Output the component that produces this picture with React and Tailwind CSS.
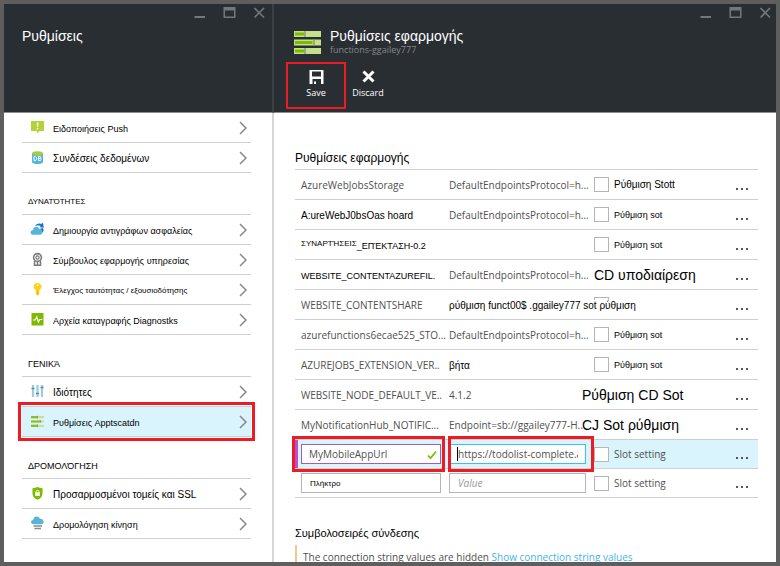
import React from "react";

const LATIN = "font-['Open_Sans','Noto_Sans',sans-serif] text-[#505050]";
const GREEK = "font-['Liberation_Sans',Arial,sans-serif] text-black";

function WindowControls() {
  return (
    <div className="flex gap-4 text-[#74787a]">
      <button type="button" aria-label="Minimize" className="h-[14px] w-[14px]">
        <svg viewBox="0 0 14 14" className="block" fill="currentColor">
          <rect x="1.5" y="9" width="10.5" height="2" />
        </svg>
      </button>
      <button type="button" aria-label="Maximize" className="h-[14px] w-[14px]">
        <svg viewBox="0 0 14 14" className="block" fill="currentColor">
          <path fillRule="evenodd" d="M.5 0h12v11H.5zM2 3.500h9v6H2z" />
        </svg>
      </button>
      <button type="button" aria-label="Close" className="h-[14px] w-[14px]">
        <svg viewBox="0 0 14 14" className="block" fill="none" stroke="currentColor" strokeWidth="1.6">
          <path d="M1.500 1l9.500 9.500M11 1l-9.500 9.500" />
        </svg>
      </button>
    </div>
  );
}

const ICONS = {
  push: (
    <>
      <path d="M1 1h13v10h-4.500l-2.500 2.500v-2.500h-6z" fill="#b2d235" />
      <path d="M6.700 2.500h1.700l-.3 4.500h-1.100z" fill="#fff" />
      <circle cx="7.500" cy="8.600" r=".9" fill="#fff" />
    </>
  ),
  data: (
    <>
      <path d="M2 3v9c0 2.700 11 2.700 11 0v-9z" fill="#55b5dc" />
      <path d="M2 3.500c0-3 11-3 11 0s-11 2.700-11 0z" fill="#a6ce39" />
      <path d="M4 6.500v4h1.200c2 0 2-4 0-4zM8.600 6.500v4h1.400c1.500 0 1.300-2 .2-2 1-.2 1-2-.2-2zM8.600 8.500h1.400" fill="none" stroke="#fff" strokeWidth="1" />
    </>
  ),
  backup: (
    <>
      <path d="M5 4c2-2.500 4-3 6-2l2-1.200.8 5-4.300-.6 1.200-1.200c-2-.7-3.500-.5-5.700 0z" fill="#1877c9" />
      <path d="M9.500 7l3.500-1c1.200 2.500.5 4.500-1.500 5z" fill="#1877c9" />
      <path d="M3.500 12.800c-4 0-3.500-4.800-.4-4.800 0-4 5.200-4.200 6.200-1 3.700-.7 4.200 5.800.4 5.800z" fill="#59b4d9" />
    </>
  ),
  advisor: (
    <>
      <circle cx="7.500" cy="5.500" r="3.900" fill="#fff" stroke="#7a7a7a" strokeWidth="1.600" />
      <circle cx="7.500" cy="5.500" r="1.600" fill="none" stroke="#7a7a7a" strokeWidth="1.200" />
      <path d="M4.500 9v4.300h6V9M7.500 9v4" fill="none" stroke="#7a7a7a" strokeWidth="1.500" />
    </>
  ),
  key: (
    <>
      <path d="M7.500 1c2.200 0 4 1.600 4 3.700 0 1.500-.9 2.700-2.200 3.300v4.200l-1.500 1.500-1.800-1.500v-4.200c-1.300-.6-2.400-1.800-2.400-3.300 0-2.100 1.700-3.700 3.900-3.700z" fill="#fcd116" />
      <circle cx="7.500" cy="3.300" r="1" fill="#fff" />
      <path d="M7.600 8v5" stroke="#e8b400" strokeWidth=".8" />
    </>
  ),
  diagnostics: (
    <>
      <path d="M1.500 1h12v12.500h-12z" fill="#7fba00" />
      <path d="M3 8h2.200l1.600-3 1.600 5 1.400-2.500h2.500" fill="none" stroke="#fff" strokeWidth="1.200" />
    </>
  ),
  properties: (
    <>
      <path d="M3 1v12M7.500 1v12M12 1v12" stroke="#9ccbe2" strokeWidth="2.200" />
      <path d="M1.500 4.500h3M6 9.500h3M10.500 3.500h3" stroke="#5a8ba4" strokeWidth="1.500" />
    </>
  ),
  settings: (
    <>
      <path d="M1 3.200h13M1 7.500h13M1 11.800h13" stroke="#c9e08f" strokeWidth="2.200" />
      <path d="M1 3.200h6M1 7.500h9M1 11.800h6" stroke="#8cbe26" strokeWidth="2.200" />
      <path d="M7.500 1.800v2.800M10.500 6v2.800M7.500 10.400v2.800" stroke="#9a9a9a" strokeWidth="1" />
    </>
  ),
  domains: (
    <>
      <path d="M7.500 .8c1.500 1 3.200 1.400 5 1.400v5.600c0 3-2.200 4.700-5 5.900-2.800-1.200-5-2.900-5-5.900V2.200c1.800 0 3.500-.4 5-1.400z" fill="#7fba00" />
      <path d="M5.200 6.200h4.600v3.700h-4.600z" fill="#fff" />
      <path d="M6 6.200c0-2.500 3-2.500 3 0" fill="none" stroke="#fff" strokeWidth="1" />
    </>
  ),
  traffic: (
    <>
      <path d="M4 8.300c-4 0-3.800-4.100-.8-4.200.2-4.200 5.400-4.600 6.600-1.400 4.800-.6 5 5.600 1.300 5.600z" fill="#59b4d9" />
      <path d="M3.500 10h8.500M4.500 12.500h6.500" stroke="#8a8a8a" strokeWidth="1.300" />
    </>
  ),
};

function NavItem({ icon, label, size = "text-[9px]", selected }) {
  return (
    <li className={`relative border-b border-[#cfcfcf] ${selected ? "bg-[#d9f4fd]" : ""}`}>
      <a href="#" className="flex h-[29px] items-center pl-2 pr-1">
        <svg viewBox="0 0 15 15" className="h-[15px] w-[15px] shrink-0">{ICONS[icon]}</svg>
        <span className={`ml-2 flex-1 whitespace-nowrap pt-[3px] leading-4 ${GREEK} ${size}`}>{label}</span>
        <svg viewBox="0 0 8 14" className="h-[14px] w-2 shrink-0" fill="none" stroke="#85888a" strokeWidth="1.5">
          <path d="M1 1l6 6-6 6" />
        </svg>
      </a>
      {selected && (
        <span className="pointer-events-none absolute -inset-x-[4px] -inset-y-[5px] border-[3px] border-[#ed1c24]" />
      )}
    </li>
  );
}

function NavHeading({ children, size = "text-[9px]" }) {
  return (
    <h2 className={`flex h-[42px] items-center border-b border-[#cfcfcf] pl-[6px] pt-4 leading-4 ${GREEK} ${size}`}>
      {children}
    </h2>
  );
}

function Dots() {
  return (
    <button type="button" aria-label="More" className="mt-2 flex h-3 w-4 items-center gap-[3px] px-[2px]">
      <span className="h-[2px] w-[2px] shrink-0 bg-[#555]" />
      <span className="h-[2px] w-[2px] shrink-0 bg-[#555]" />
      <span className="h-[2px] w-[2px] shrink-0 bg-[#555]" />
    </button>
  );
}

function SlotBox({ label, latin, size = "text-[9px]" }) {
  return (
    <label className="flex items-center gap-[5px] whitespace-nowrap">
      <input
        type="checkbox"
        aria-label={label || "Slot setting"}
        className="h-[15px] w-[15px] shrink-0 appearance-none border border-[#b5b5b5] bg-white"
      />
      <span className={`leading-4 ${latin ? `${LATIN} text-[10px]` : `${GREEK} ${size}`}`}>{label}</span>
    </label>
  );
}

const ENDPOINT = "DefaultEndpointsProtocol=h...";
const ROWS = [
  { name: "AzureWebJobsStorage", value: ENDPOINT, slot: "Ρύθμιση Stott", slotSize: "text-[10px]" },
  { name: "A:ureWebJ0bsOas hoard", greekName: "text-[10px]", value: ENDPOINT, slot: "Ρύθμιση sot" },
  { split: ["ΣΥΝΑΡΤΉΣΕΙΣ", "_ΕΠΈΚΤΑΣΗ-0.2"], value: "", slot: "Ρύθμιση sot" },
  { name: "WEBSITE_CONTENTAZUREFIL.", greekName: "text-[9px]", value: ENDPOINT, big: "CD υποδιαίρεση" },
  { name: "WEBSITE_CONTENTSHARE", value: "ρύθμιση funct00$ .ggailey777 sot ρύθμιση", greekValue: true, slot: "" },
  { name: "azurefunctions6ecae525_STO...", value: ENDPOINT, slot: "Ρύθμιση sot" },
  { name: "AZUREJOBS_EXTENSION_VER..", value: "βήτα", greekValue: true, slot: "Ρύθμιση sot" },
  { name: "WEBSITE_NODE_DEFAULT_VE..", value: "4.1.2", big: "Ρύθμιση CD Sot", pull: true },
  { name: "MyNotificationHub_NOTIFIC...", value: "Endpoint=sb://ggailey777-H..", big: "CJ Sot ρύθμιση", pull: true },
];

function SettingRow({ row }) {
  return (
    <tr className="h-[30px] border-b border-[#cfcfcf]">
      <td className="whitespace-nowrap p-0 pl-[6px]">
        {row.split ? (
          <span className={`flex ${GREEK}`}>
            <span className="text-[8px] leading-3">{row.split[0]}</span>
            <span className="pt-[2px] text-[9px] leading-3">{row.split[1]}</span>
          </span>
        ) : (
          <span className={`block leading-4 ${row.greekName ? `pt-[2px] ${GREEK} ${row.greekName}` : `${LATIN} text-[10px]`}`}>
            {row.name}
          </span>
        )}
      </td>
      <td className="whitespace-nowrap p-0 pl-1">
        {row.greekValue ? (
          <span className={`relative inline-block bg-white align-middle text-[10px] leading-3 ${GREEK}`}>{row.value}</span>
        ) : (
          <span className={`block text-[10px] leading-4 ${LATIN}`}>{row.value}</span>
        )}
      </td>
      <td className="p-0">
        {row.big ? (
          <span className={`relative block whitespace-nowrap text-[14px] leading-5 ${GREEK} ${row.pull ? "-ml-3" : ""}`}>
            {row.big}
          </span>
        ) : (
          <SlotBox label={row.slot} size={row.slotSize} />
        )}
      </td>
      <td className="p-0"><Dots /></td>
    </tr>
  );
}

export default function App() {
  return (
    <div className="flex h-screen overflow-hidden border-4 border-[#5e5e5e] bg-white">
      <aside className="flex w-[270px] shrink-0 flex-col border-r-2 border-[#d6d6d6]">
        <header className="-mr-[2px] h-[109px] shrink-0 border-b border-r-2 border-b-[#8a8c8e] border-r-[#3b4044] bg-[#292e32]">
          <div className="flex justify-end pr-[5px] pt-[3px]"><WindowControls /></div>
          <h1 className="pl-[18px] pt-[3px] font-['Liberation_Sans',Arial,sans-serif] text-[14px] leading-6 text-white">Ρυθμίσεις</h1>
        </header>
        <nav className="pl-[18px] pr-[21px]">
          <ul>
            <NavItem icon="push" label="Ειδοποιήσεις Push" />
            <NavItem icon="data" label="Συνδέσεις δεδομένων" size="text-[10px]" />
          </ul>
          <NavHeading size="text-[8px]">ΔΥΝΑΤΌΤΗΤΕΣ</NavHeading>
          <ul>
            <NavItem icon="backup" label="Δημιουργία αντιγράφων ασφαλείας" />
            <NavItem icon="advisor" label="Σύμβουλος εφαρμογής υπηρεσίας" />
            <NavItem icon="key" label="Έλεγχος ταυτότητας / εξουσιοδότησης" size="text-[8px]" />
            <NavItem icon="diagnostics" label="Αρχεία καταγραφής Diagnostks" />
          </ul>
          <NavHeading>ΓΕΝΙΚΆ</NavHeading>
          <ul>
            <NavItem icon="properties" label="Ιδιότητες" size="text-[10px]" />
            <NavItem icon="settings" label="Ρυθμίσεις Apptscatdn" selected />
          </ul>
          <NavHeading>ΔΡΟΜΟΛΌΓΗΣΗ</NavHeading>
          <ul>
            <NavItem icon="domains" label="Προσαρμοσμένοι τομείς και SSL" size="text-[10px]" />
            <NavItem icon="traffic" label="Δρομολόγηση κίνηση" />
          </ul>
        </nav>
      </aside>

      <main className="flex min-w-0 flex-1 flex-col">
        <header className="h-[109px] shrink-0 border-b border-[#8a8c8e] bg-[#292e32]">
          <div className="flex justify-end pr-[3px] pt-[3px]"><WindowControls /></div>
          <div className="flex items-center gap-[9px] pl-5 pt-[3px]">
            <svg viewBox="0 0 27 23" className="mt-1 h-[23px] w-[27px] shrink-0">
              <path d="M0 0h27v6H0zM0 8.500h27v6H0zM0 17h27v6H0z" fill="#c5e08c" />
              <path d="M1 1.500h9.500v3H1zM1 10h17.500v3H1zM1 18.500h9.500v3H1z" fill="#7fba00" />
              <path d="M11 0v6M20 8.500v6M11 17v6" stroke="#8f9a80" strokeWidth="1.500" />
            </svg>
            <div>
              <h1 className="font-['Liberation_Sans',Arial,sans-serif] text-[14px] leading-6 text-white">Ρυθμίσεις εφαρμογής</h1>
              <p className="-mt-1 font-['Open_Sans','Noto_Sans',sans-serif] text-[9px] leading-3 text-[#85898c]">functions-ggailey777</p>
            </div>
          </div>
          <div className="flex pl-3 pt-[6px] font-['Open_Sans','Noto_Sans',sans-serif] text-[9px] leading-4 text-white">
            <button type="button" className="flex h-[47px] w-[60px] flex-col items-center border-2 border-[#ed1c24] pt-[6px]">
              <svg viewBox="0 0 15 15" className="h-[15px] w-[15px]" fill="#fff">
                <path fillRule="evenodd" d="M.5 0h14v14h-2.500V9H3.500v5H.5zM3 1.500h9v5H3z" />
                <path d="M5 11.500h2V14H5z" />
              </svg>
              <span>Save</span>
            </button>
            <button type="button" className="flex h-[47px] w-[44px] flex-col items-center pt-2">
              <svg viewBox="0 0 15 15" className="h-[15px] w-[15px]" stroke="#fff" strokeWidth="3">
                <path d="M2.500 1.500l10 10M12.500 1.500l-10 10" />
              </svg>
              <span>Discard</span>
            </button>
          </div>
        </header>

        <section className="pl-[21px] pr-[18px]">
          <h2 className={`pb-[2px] pt-9 text-[12px] leading-[18px] ${GREEK}`}>Ρυθμίσεις εφαρμογής</h2>
          <table className="w-full table-fixed border-collapse border-t border-[#cfcfcf]">
            <colgroup>
              <col className="w-[150px]" />
              <col className="w-[149px]" />
              <col />
              <col className="w-[24px]" />
            </colgroup>
            <tbody>
              {ROWS.map((row, i) => <SettingRow key={i} row={row} />)}
              <tr className="h-[29px] border-b border-[#cfcfcf] bg-[#d9f4fd]">
                <td className="relative p-0 pl-[6px] pr-1">
                  <span className="absolute inset-y-0 left-0 w-[3px] bg-[#b84fd6]" />
                  <div className="relative">
                    <input
                      aria-label="Key"
                      defaultValue="MyMobileAppUrl"
                      className={`block h-5 w-full border border-[#a060ac] bg-white pl-[7px] pr-5 text-[10px] ${LATIN}`}
                    />
                    <svg viewBox="0 0 10 10" className="absolute right-1 top-[6px] h-[10px] w-[10px]" fill="none" stroke="#7fba00" strokeWidth="1.800">
                      <path d="M1 5.500l2.500 2.700L9 1.500" />
                    </svg>
                  </div>
                  <span className="pointer-events-none absolute -inset-y-1 -left-[3px] right-0 border-[3px] border-[#ed1c24]" />
                </td>
                <td className="relative p-0 pl-1 pr-2">
                  <div className="relative">
                    <input
                      aria-label="Value"
                      defaultValue="https://todolist-complete.azurewebsites.net"
                      className={`block h-5 w-full border border-[#3dbfee] bg-white pl-2 pr-[7px] text-[10px] ${LATIN}`}
                    />
                    <span className="absolute left-2 top-[3px] h-[14px] w-px bg-black" />
                  </div>
                  <span className="pointer-events-none absolute -inset-y-1 left-[3px] right-0 border-[3px] border-[#ed1c24]" />
                </td>
                <td className="p-0"><SlotBox latin label="Slot setting" /></td>
                <td className="p-0"><Dots /></td>
              </tr>
              <tr className="h-[29px] border-b border-[#cfcfcf]">
                <td className="p-0 pl-[6px] pr-1">
                  <input
                    aria-label="Πλήκτρο"
                    placeholder="Πλήκτρο"
                    className="block h-5 w-full border border-[#b5b5b5] bg-white px-2 font-['Liberation_Sans',Arial,sans-serif] text-[8px] placeholder:text-black"
                  />
                </td>
                <td className="p-0 pl-1 pr-2">
                  <input
                    aria-label="New value"
                    placeholder="Value"
                    className="block h-5 w-full border border-[#b5b5b5] bg-white px-2 font-['Open_Sans','Noto_Sans',sans-serif] text-[10px] italic placeholder:text-[#999]"
                  />
                </td>
                <td className="p-0"><SlotBox latin label="Slot setting" /></td>
                <td className="p-0"><Dots /></td>
              </tr>
            </tbody>
          </table>

          <h2 className={`pb-[3px] pt-[26px] text-[11px] leading-[18px] ${GREEK}`}>Συμβολοσειρές σύνδεσης</h2>
          <p className={`border-l-2 border-[#f0c890] pb-2 pl-[6px] pt-1 text-[10px] leading-4 ${LATIN}`}>
            The connection string values are hidden <a href="#" className="text-[#3fb4e6]">Show connection string values</a>
          </p>
        </section>
      </main>
    </div>
  );
}
